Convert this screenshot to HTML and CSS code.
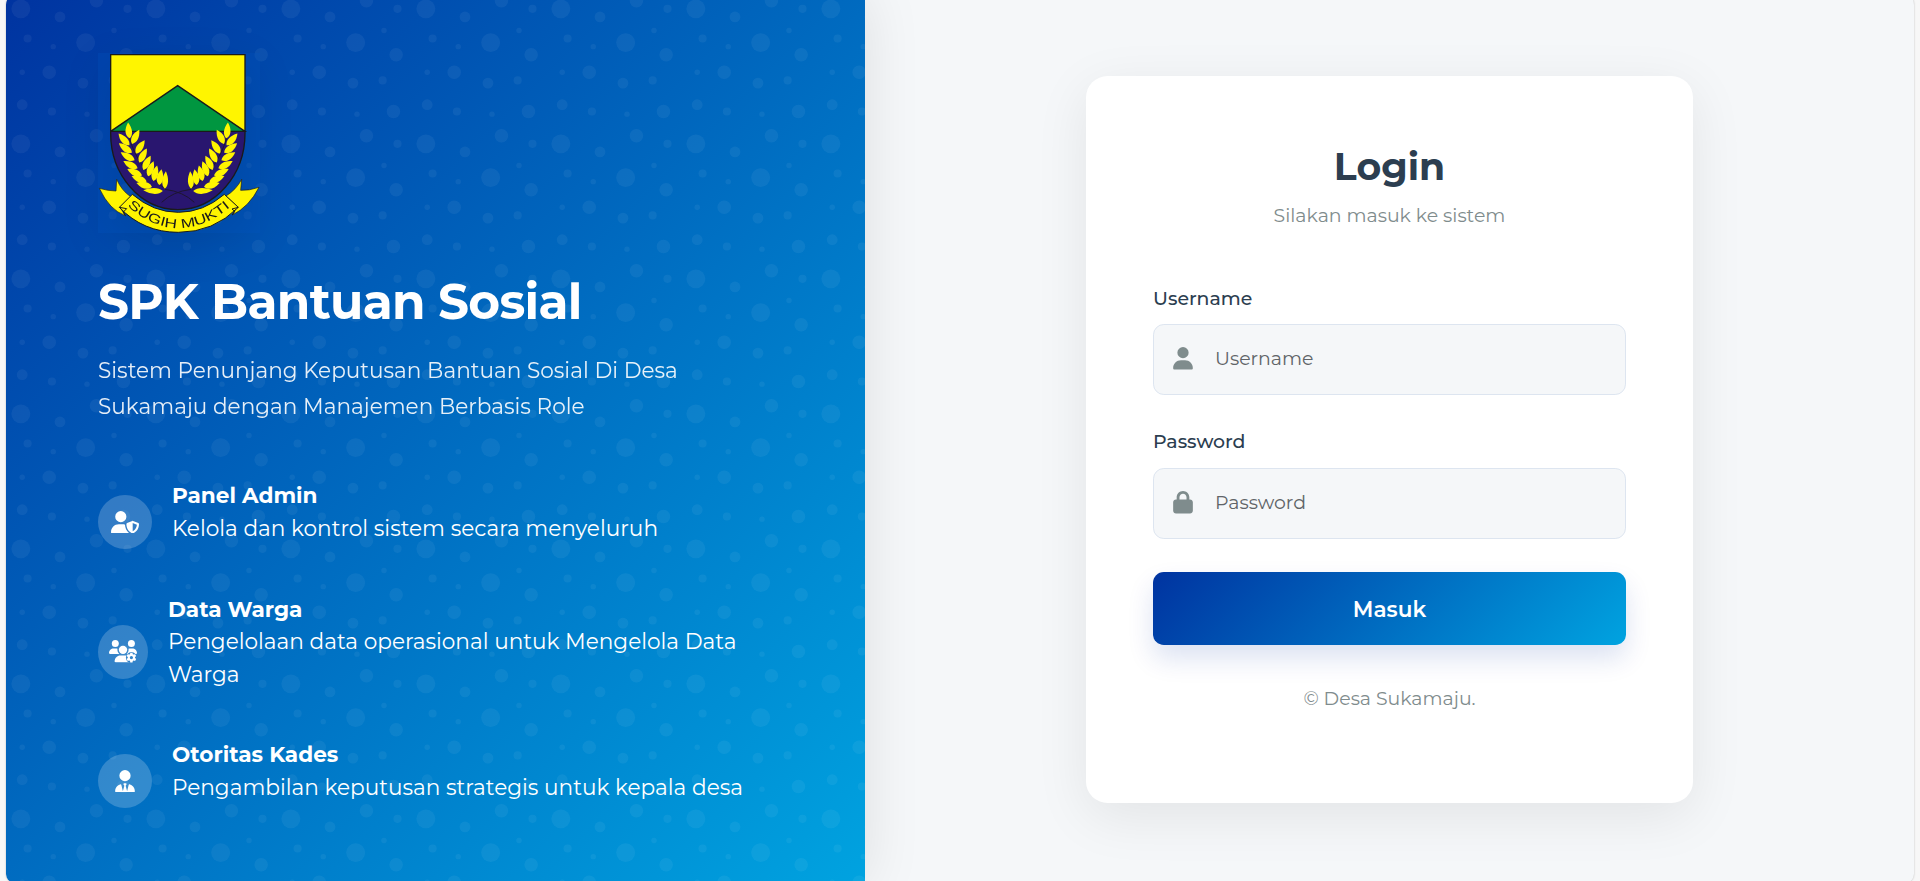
FILE: index.html
```
<!DOCTYPE html>
<html lang="id">
<head>
<meta charset="utf-8">
<title>Login - SPK Bantuan Sosial</title>
<link rel="stylesheet" href="styles.css">
</head>
<body>
<main class="container">
  <section class="hero">
    <svg class="hero-pattern" width="100%" height="100%" aria-hidden="true">
      <defs>
        <pattern id="bubbles" width="100" height="100" patternUnits="userSpaceOnUse" patternTransform="scale(1.35)">
          <g fill="#fff">
            <circle cx="11" cy="11" r="7"/><circle cx="59" cy="36" r="7"/>
            <circle cx="16" cy="33" r="3"/><circle cx="79" cy="64" r="3"/><circle cx="34" cy="87" r="3"/><circle cx="90" cy="11" r="3"/>
            <circle cx="12" cy="82" r="4"/><circle cx="40" cy="17" r="4"/><circle cx="57" cy="66" r="4"/>
            <circle cx="67" cy="5" r="5"/><circle cx="87" cy="87" r="5"/><circle cx="32" cy="58" r="5"/><circle cx="89" cy="45" r="5"/>
            <circle cx="80" cy="27" r="2"/><circle cx="60" cy="89" r="2"/><circle cx="35" cy="39" r="2"/><circle cx="12" cy="58" r="2"/>
          </g>
        </pattern>
      </defs>
      <rect width="100%" height="100%" fill="url(#bubbles)"/>
    </svg>
    <div class="hero-content">
      <svg class="logo" viewBox="294 159 486 540" role="img" aria-label="Logo Sugih Mukti">
        <defs>
          <path id="leaf" d="M0 2C-14-8-14-27 0-46C12-27 12-8 0 2Z"/>
          <g id="wheat">
            <path d="M388 415C405 470 440 530 498 568" fill="none" stroke="#1d1530" stroke-width="3"/>
            <g fill="#fff500">
              <use href="#leaf" transform="translate(389 413) rotate(-6)"/>
              <use href="#leaf" transform="translate(387 434) rotate(-43)"/>
              <use href="#leaf" transform="translate(394 457) rotate(-54)"/>
              <use href="#leaf" transform="translate(402 480) rotate(-60)"/>
              <use href="#leaf" transform="translate(411 504) rotate(-63)"/>
              <use href="#leaf" transform="translate(424 526) rotate(-66)"/>
              <use href="#leaf" transform="translate(438 544) rotate(-70)"/>
              <use href="#leaf" transform="translate(454 560) rotate(-76)"/>
              <use href="#leaf" transform="translate(486 573) rotate(-88) scale(.9 1.22)"/>
              <use href="#leaf" transform="translate(397 430) rotate(27)"/>
              <use href="#leaf" transform="translate(409 459) rotate(33)"/>
              <use href="#leaf" transform="translate(419 486) rotate(28)"/>
              <use href="#leaf" transform="translate(431 508) rotate(27)"/>
              <use href="#leaf" transform="translate(445 527) rotate(20)"/>
              <use href="#leaf" transform="translate(461 541) rotate(13)"/>
              <use href="#leaf" transform="translate(478 553) rotate(8)"/>
              <use href="#leaf" transform="translate(495 564) rotate(3) scale(.9 1.1)"/>
            </g>
            <path d="M495 568Q550 575 583 607" fill="none" stroke="#1d1530" stroke-width="3"/>
          </g>
        </defs>
        <rect class="logo-plate" x="294" y="159" width="486" height="540"/>
        <path d="M332 394H735V400A201.500 229 0 0 1 332 400Z" fill="#29166f"/>
        <path d="M332 165H735V394H332Z" fill="#fff500"/>
        <path d="M332 394L533 257L735 394Z" fill="#009640"/>
        <path d="M332 394L533 257L735 394H332M332 164H735V400A201.500 229 0 0 1 332 400Z" fill="none" stroke="#1a1a1a" stroke-width="4"/>
        <use href="#wheat"/>
        <use href="#wheat" transform="translate(1068 0) scale(-1 1)"/>
        <g fill="#fff500" stroke="#1a1a1a" stroke-width="2">
          <path d="M298 565Q325 573 348 573L350 538Q365 572 392 590L360 622L376 647Q328 630 298 565Z"/>
          <path d="M777 562Q748 572 722 571L725 538Q708 570 678 588L712 620L697 645Q748 620 777 562Z"/>
          <path d="M397 583Q460 637 535 637Q610 637 673 583L715 622Q640 697 535 697Q430 697 358 622Z" stroke-width="3"/>
          <path d="M358 622L380 626L370 636L376 647M715 622L696 627L704 634L697 645" fill="none" stroke-width="3"/>
        </g>
        <path id="motto" d="M379 615Q455 684 535 684Q620 684 700 613" fill="none"/>
        <text class="motto"><textPath href="#motto" startOffset="4" textLength="342" lengthAdjust="spacingAndGlyphs">SUGIH MUKTI</textPath></text>
      </svg>
      <h1 class="hero-title">SPK Bantuan Sosial</h1>
      <p class="hero-text">Sistem Penunjang Keputusan Bantuan Sosial Di Desa<br>Sukamaju dengan Manajemen Berbasis Role</p>
      <ul class="features">
        <li class="feature">
          <span class="feature-icon"><svg viewBox="0 0 640 512" width="28" height="22.500" fill="#fff"><path d="M224 256A128 128 0 1 0 224 0a128 128 0 1 0 0 256zm-45.700 48C79.800 304 0 383.800 0 482.300C0 498.700 13.300 512 29.700 512H418.300c1.800 0 3.500-.2 5.300-.5c-76.300-55.100-99.800-141-103.100-200.200c-16.100-4.800-33.100-7.300-50.700-7.300H178.300zm308.800-78.300l-120 48C358 277.400 352 286.200 352 296c0 63.300 25.900 168.800 134.800 214.200c5.900 2.500 12.600 2.500 18.500 0C614.100 464.800 640 359.300 640 296c0-9.800-6-18.600-15.100-22.300l-120-48c-5.700-2.300-12.100-2.300-17.800 0zM591.400 312c-3.900 50.700-27.200 116.700-95.400 149.700V273.800L591.400 312z"/></svg></span>
          <div><strong>Panel Admin</strong><br>Kelola dan kontrol sistem secara menyeluruh</div>
        </li>
        <li class="feature feature-tall">
          <span class="feature-icon"><svg viewBox="0 0 640 512" width="28" height="22.500" fill="#fff">
            <defs><mask id="gear-gap"><path fill="#fff" d="M0 0H640V512H0Z"/><circle cx="512" cy="400" r="125" fill="#000"/></mask></defs>
            <circle cx="144" cy="80" r="80"/><circle cx="512" cy="80" r="80"/><circle cx="320" cy="224" r="96"/>
            <path d="M0 298.700C0 310.400 9.600 320 21.300 320H235.400c-26.600-23.500-43.300-57.800-43.300-96c0-7.600.7-15 1.900-22.300c-13.600-6.300-28.700-9.700-44.600-9.700H106.700C47.800 192 0 239.800 0 298.700z"/>
            <path mask="url(#gear-gap)" d="M405 320H618.700c11.700 0 21.300-9.600 21.300-21.300C640 239.800 592.200 192 533.300 192H490.700c-15.900 0-31 3.500-44.600 9.700c1.300 7.200 1.900 14.700 1.900 22.300c0 38.200-16.800 72.500-43 96z"/>
            <path mask="url(#gear-gap)" d="M261.300 352H378.700C452.300 352 512 411.700 512 485.300V512H154.700c-14.700 0-26.700-12-26.700-26.700C128 411.700 187.700 352 261.300 352z"/>
            <path fill-rule="evenodd" d="M487 288h50l7 34 19 11 33-11 25 43-26 23v24l26 23-25 43-33-11-19 11-7 34h-50l-7-34-19-11-33 11-25-43 26-23v-24l-26-23 25-43 33 11 19-11zM512 363a37 37 0 1 0 0 74a37 37 0 1 0 0-74z"/>
          </svg></span>
          <div><strong>Data Warga</strong><br>Pengelolaan data operasional untuk Mengelola Data<br>Warga</div>
        </li>
        <li class="feature">
          <span class="feature-icon"><svg viewBox="0 0 448 512" width="20" height="22.500" fill="#fff"><path d="M96 128a128 128 0 1 0 256 0A128 128 0 1 0 96 128zm94.500 200.200l18.600 31L175.800 483.100l-36-146.900c-2-8.100-9.800-13.400-17.900-11.300C51.900 342.400 0 405.800 0 481.300c0 17 13.800 30.700 30.700 30.700H417.300c17 0 30.700-13.800 30.700-30.700c0-75.500-51.900-138.900-121.900-156.400c-8.100-2-15.900 3.300-17.900 11.300l-36 146.900L238.900 359.200l18.600-31c6.400-10.700-1.300-24.200-13.700-24.200H204.300c-12.400 0-20.100 13.600-13.700 24.200z"/></svg></span>
          <div><strong>Otoritas Kades</strong><br>Pengambilan keputusan strategis untuk kepala desa</div>
        </li>
      </ul>
    </div>
  </section>
  <section class="panel">
    <form class="card">
      <h2 class="card-title">Login</h2>
      <p class="card-subtitle">Silakan masuk ke sistem</p>
      <label class="label" for="username">Username</label>
      <div class="field">
        <svg viewBox="0 0 448 512" width="20" height="22.500" fill="#7f8c8d"><path d="M224 256A128 128 0 1 0 224 0a128 128 0 1 0 0 256zm-45.700 48C79.800 304 0 383.800 0 482.300C0 498.700 13.300 512 29.700 512H418.300c16.400 0 29.700-13.300 29.700-29.700C448 383.800 368.200 304 269.700 304H178.300z"/></svg>
        <input id="username" class="input" type="text" placeholder="Username">
      </div>
      <label class="label label-next" for="password">Password</label>
      <div class="field">
        <svg viewBox="0 0 448 512" width="20" height="22.500" fill="#7f8c8d"><path d="M144 144v48H304V144c0-44.200-35.800-80-80-80s-80 35.800-80 80zM80 192V144C80 64.500 144.500 0 224 0s144 64.500 144 144v48h16c35.300 0 64 28.700 64 64V448c0 35.300-28.700 64-64 64H64c-35.300 0-64-28.700-64-64V256c0-35.300 28.700-64 64-64H80z"/></svg>
        <input id="password" class="input" type="password" placeholder="Password">
      </div>
      <button class="submit" type="button">Masuk</button>
      <p class="footer">© Desa Sukamaju.</p>
    </form>
  </section>
</main>
</body>
</html>
```

FILE: styles.css
```
* {
  box-sizing: border-box;
  margin: 0;
  padding: 0;
}

body {
  height: 881px;
  overflow: hidden;
  padding: 0 6px;
  background: #f7f7f7;
  font-family: Montserrat, Inter, sans-serif;
  font-size: 21.6px;
}

.container {
  display: flex;
  height: 890px;
  margin-top: -6px;
  overflow: hidden;
  border-radius: 10.8px;
  background: #f5f7f9;
  box-shadow: 0 0 2px rgba(0, 0, 0, 0.25);
}

.hero {
  position: relative;
  z-index: 1;
  flex: 0 0 859px;
  background: linear-gradient(135deg, #0033a0 0%, #00a3e0 100%);
  box-shadow: 0 0 54px rgba(0, 0, 0, 0.1);
  color: #fff;
}

.hero-pattern {
  position: absolute;
  inset: 0;
  opacity: 0.05;
}

.hero-content {
  position: relative;
  padding: 59px 92px 0;
}

.logo {
  display: block;
  width: 162px;
  height: 180px;
  filter: drop-shadow(0 13px 20px rgba(0, 0, 0, 0.1));
}

.logo-plate {
  fill: #0055c0;
  opacity: 0.25;
}

.motto {
  font-family: "Liberation Sans", Arial, sans-serif;
  font-size: 39px;
  fill: #1a1a1a;
}

.hero-title {
  margin-top: 38.5px;
  font-size: 48.6px;
  font-weight: 700;
  line-height: 60px;
  letter-spacing: -0.7px;
  white-space: nowrap;
}

.hero-text {
  margin-top: 20.5px;
  font-size: 21.6px;
  line-height: 36px;
  opacity: 0.9;
  white-space: nowrap;
}

.features {
  display: flex;
  flex-direction: column;
  gap: 43.5px;
  margin-top: 55px;
  list-style: none;
}

.feature {
  display: flex;
  align-items: flex-start;
  gap: 20px;
  line-height: 32.5px;
  white-space: nowrap;
}

.feature strong {
  font-weight: 700;
}

.feature-icon {
  display: flex;
  flex: 0 0 54px;
  align-items: center;
  justify-content: center;
  height: 54px;
  margin-top: 16px;
  border-radius: 50%;
  background: rgba(255, 255, 255, 0.2);
}

.feature-tall {
  margin-bottom: 4.5px;
}

.feature-tall .feature-icon {
  flex-basis: 50px;
  margin-top: 32px;
}

.panel {
  display: flex;
  flex: 1;
  align-items: flex-start;
  justify-content: center;
  padding-top: 82px;
}

.card {
  width: 607px;
  height: 727px;
  padding: 67.5px 67px 0;
  border-radius: 21.6px;
  background: #fff;
  box-shadow: 0 13.5px 54px rgba(0, 0, 0, 0.08);
}

.card-title {
  color: #2c3e50;
  font-size: 37.8px;
  font-weight: 700;
  line-height: 44px;
  text-align: center;
}

.card-subtitle {
  margin: 14px 0 56.5px;
  color: #7f8c8d;
  font-size: 18.9px;
  line-height: 28px;
  text-align: center;
}

.label {
  display: block;
  margin-bottom: 12px;
  color: #2c3e50;
  font-size: 18.9px;
  font-weight: 500;
  line-height: 26px;
}

.label-next {
  margin-top: 34px;
  margin-bottom: 13px;
}

.field {
  display: flex;
  align-items: center;
  gap: 22px;
  height: 71px;
  padding: 0 20px 2px 19px;
  border: 1px solid #dde5f0;
  border-radius: 10.8px;
  background: #f5f7f9;
}

.input {
  flex: 1;
  min-width: 0;
  border: 0;
  outline: 0;
  background: transparent;
  color: #2c3e50;
  font-family: inherit;
  font-size: 18.9px;
  line-height: 26px;
}

.input::placeholder {
  color: #606468;
}

.submit {
  display: block;
  width: 100%;
  height: 73px;
  margin-top: 33px;
  border: 0;
  border-radius: 10.8px;
  background: linear-gradient(135deg, #0033a0 0%, #00a3e0 100%);
  box-shadow: 0 13.5px 27px rgba(0, 51, 160, 0.14);
  color: #fff;
  font-family: inherit;
  font-size: 21.6px;
  font-weight: 600;
}

.footer {
  margin-top: 40px;
  color: #7f8c8d;
  font-size: 18.9px;
  line-height: 28px;
  text-align: center;
}
```
